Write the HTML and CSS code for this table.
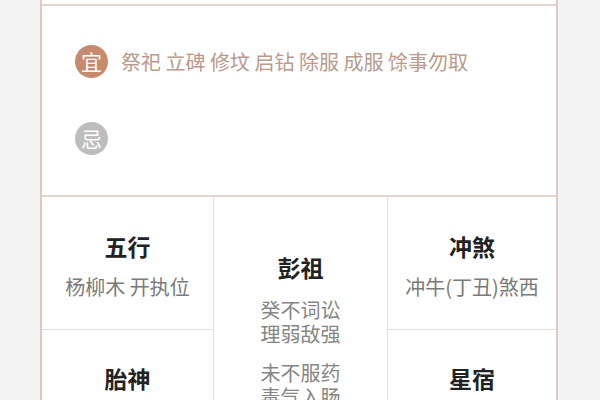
FILE: index.html
```html
<!DOCTYPE html>
<html lang="zh">
<head>
<meta charset="utf-8">
<link rel="stylesheet" href="styles.css">
</head>
<body>
<div class="card">
  <div class="prev"></div>
  <div class="yiji">
    <div class="row">
      <span class="badge yi">宜</span>
      <span class="items">祭祀 立碑 修坟 启钻 除服 成服 馀事勿取</span>
    </div>
    <div class="row">
      <span class="badge ji">忌</span>
      <span class="items"></span>
    </div>
  </div>
  <div class="grid">
    <div class="cell c1 r1">
      <div class="title">五行</div>
      <div class="sub">杨柳木 开执位</div>
    </div>
    <div class="cell mid">
      <div class="title">彭祖</div>
      <div class="para">癸不词讼<br>理弱敌强</div>
      <div class="para">未不服药<br>毒气入肠</div>
    </div>
    <div class="cell c3 r1">
      <div class="title">冲煞</div>
      <div class="sub">冲牛(丁丑)煞西</div>
    </div>
    <div class="cell c1 r2">
      <div class="title">胎神</div>
    </div>
    <div class="cell c3 r2">
      <div class="title">星宿</div>
    </div>
  </div>
</div>
</body>
</html>
```
FILE: styles.css
```css
html, body {
  margin: 0;
  padding: 0;
  background: #f4f4f4;
  font-family: "Noto Sans CJK SC", "Noto Sans", sans-serif;
}

.card {
  width: 514px;
  margin-left: 40px;
  background: #ffffff;
  border-left: 2px solid #dccbc3;
  border-right: 2px solid #dccbc3;
  height: 400px;
  overflow: hidden;
}

.prev {
  height: 4px;
  border-bottom: 2px solid #e2d5cf;
}

.yiji {
  height: 189px;
  box-sizing: border-box;
  padding: 39px 0 0 33px;
  display: flex;
  flex-direction: column;
  gap: 44px;
}

.row {
  display: flex;
  align-items: center;
  gap: 13px;
  height: 33px;
}

.badge {
  width: 33px;
  height: 33px;
  border-radius: 50%;
  color: #ffffff;
  font-size: 21px;
  line-height: 33px;
  text-align: center;
  flex: none;
}

.yi { background: #c68a6e; }
.ji { background: #bdbdbd; }

.items {
  font-size: 20px;
  color: #b99a8c;
  white-space: nowrap;
}

.grid {
  display: grid;
  grid-template-columns: 172px 174px 1fr;
  grid-template-rows: 133px 133px;
  border-top: 2px solid #e2d5cf;
}

.cell {
  text-align: center;
  box-sizing: border-box;
}

.c1 {
  grid-column: 1;
  border-right: 1px solid #e6dcd8;
  border-bottom: 1px solid #e6dcd8;
  padding-top: 34px;
}

.c3 {
  grid-column: 3;
  border-bottom: 1px solid #e6dcd8;
  padding-top: 34px;
}

.r1 { grid-row: 1; }
.r2 { grid-row: 2; padding-top: 33px; }

.mid {
  grid-column: 2;
  grid-row: 1 / span 2;
  border-right: 1px solid #e6dcd8;
  padding-top: 55px;
}

.title {
  font-size: 23px;
  font-weight: 700;
  color: #222222;
  line-height: 30px;
}

.sub {
  margin-top: 12px;
  font-size: 20px;
  line-height: 28px;
  color: #7a7a7a;
  white-space: nowrap;
}

.para {
  margin-top: 16px;
  font-size: 20px;
  line-height: 23.5px;
  color: #858585;
}
```
